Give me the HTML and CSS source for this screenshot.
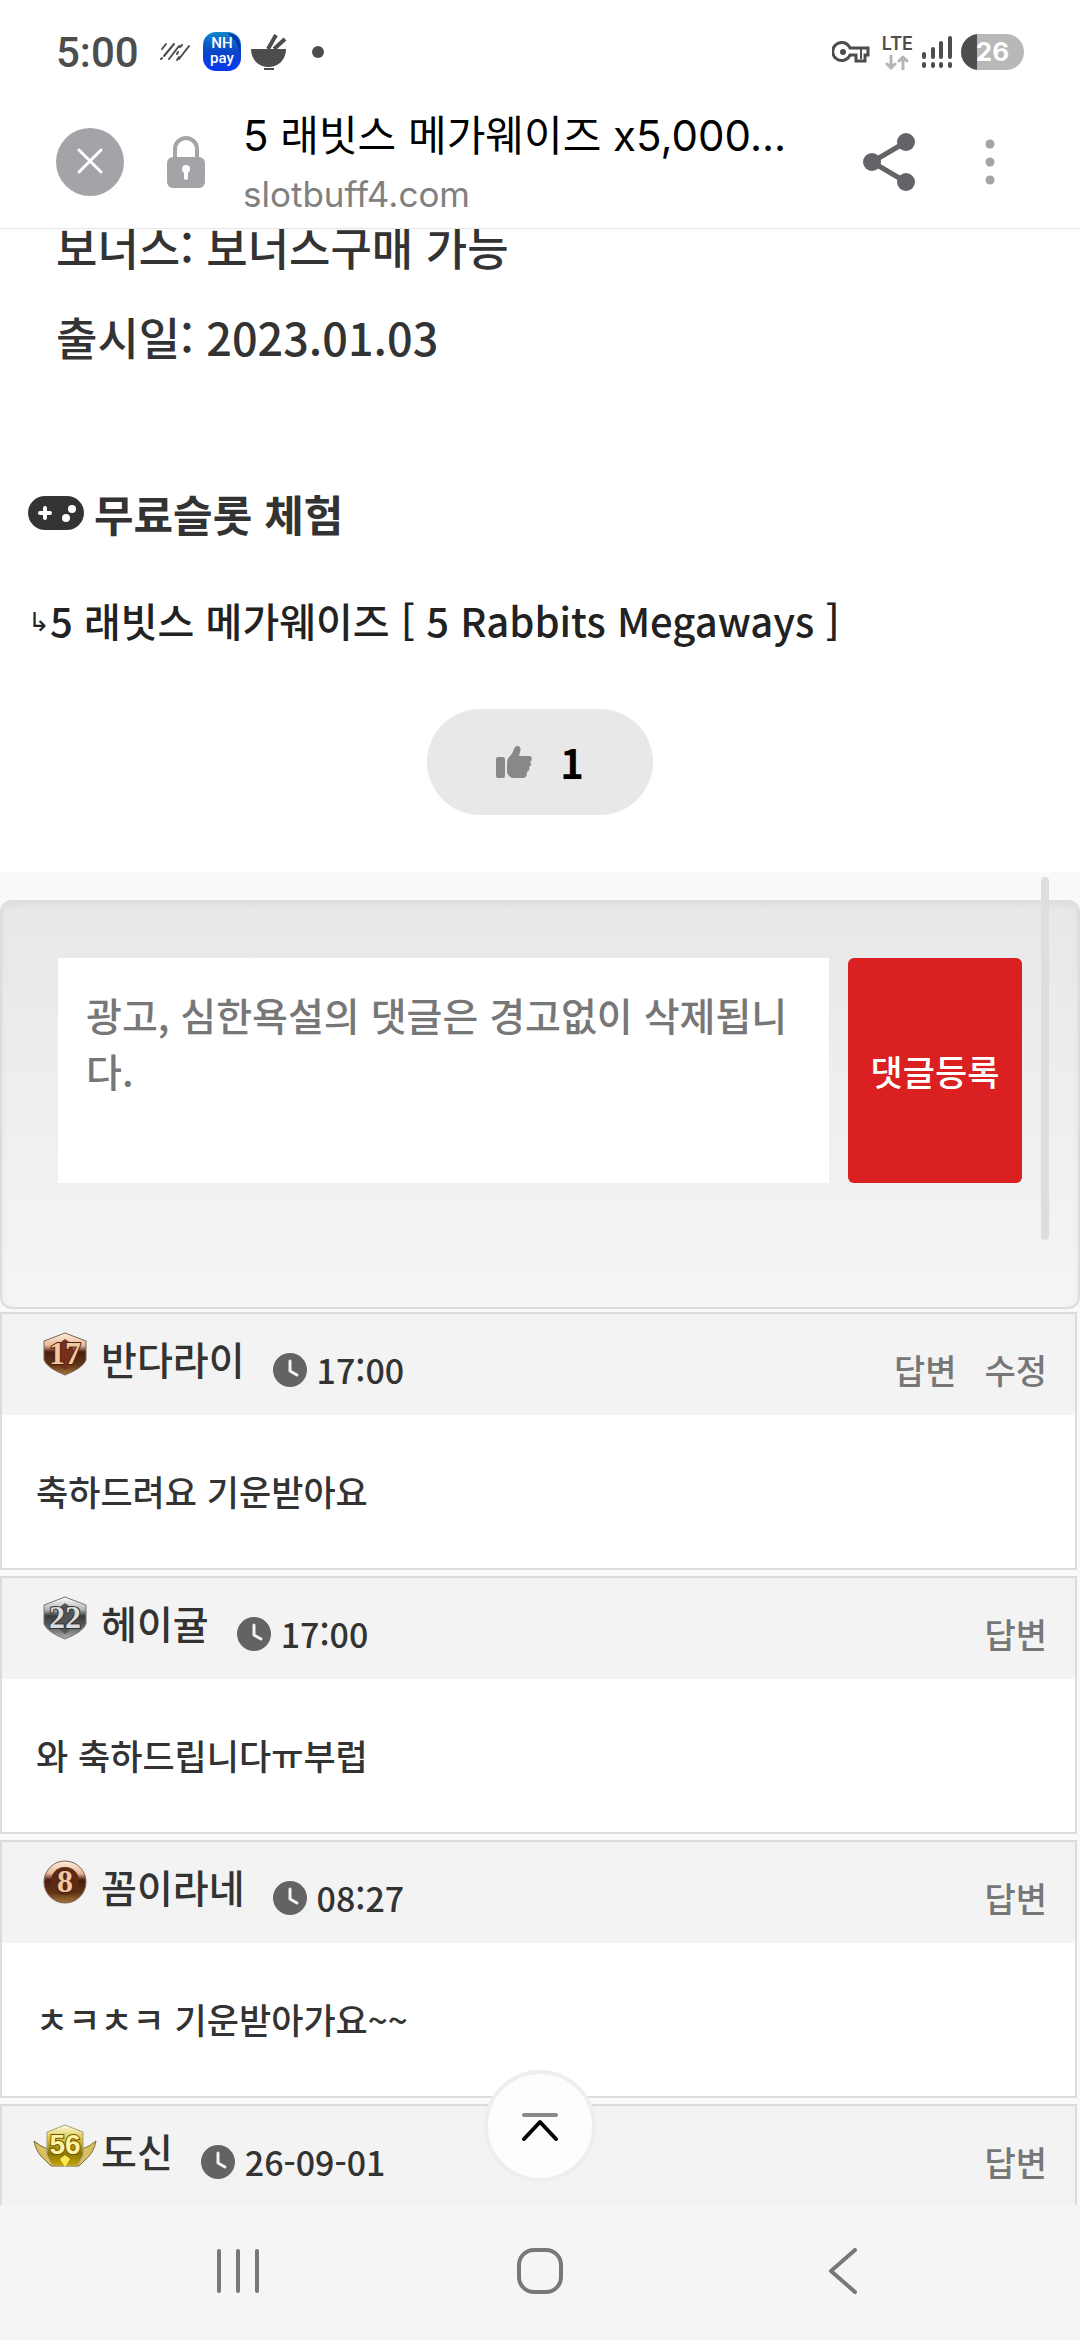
FILE: index.html
```html
<!DOCTYPE html>
<html lang="ko">

<head>
    <meta charset="UTF-8" />
    <meta name="viewport" content="width=device-width, initial-scale=1.0" />
    <title>5 래빗스 메가웨이즈 x5,000</title>
    <link rel="stylesheet" href="styles.css">
</head>

<body>
    <svg class="defs" width="0" height="0" aria-hidden="true">
        <defs>
            <linearGradient id="bronze" x1="0" y1="0" x2="0" y2="1">
                <stop offset="0" stop-color="#fff0dc" />
                <stop offset="0.3" stop-color="#e8b898" />
                <stop offset="0.45" stop-color="#4a1c10" />
                <stop offset="0.75" stop-color="#5e3416" />
                <stop offset="1" stop-color="#a5773a" />
            </linearGradient>
            <linearGradient id="silver" x1="0" y1="0" x2="0" y2="1">
                <stop offset="0" stop-color="#ffffff" />
                <stop offset="0.3" stop-color="#b4b4b4" />
                <stop offset="0.45" stop-color="#3a3a3a" />
                <stop offset="0.7" stop-color="#5c5c5c" />
                <stop offset="1" stop-color="#b0b0b0" />
            </linearGradient>
            <linearGradient id="gold" x1="0" y1="0" x2="0" y2="1">
                <stop offset="0" stop-color="#fffde8" />
                <stop offset="0.35" stop-color="#dcc13a" />
                <stop offset="0.7" stop-color="#8c7404" />
                <stop offset="1" stop-color="#c9a708" />
            </linearGradient>
            <linearGradient id="nh" x1="0" y1="0" x2="0" y2="1">
                <stop offset="0" stop-color="#1287c8" />
                <stop offset="0.5" stop-color="#0a45c8" />
                <stop offset="1" stop-color="#0538f5" />
            </linearGradient>
            <symbol id="clock" viewBox="0 0 34 34">
                <circle cx="17" cy="17" r="17" fill="#636363" />
                <path d="M17 8v10l7 4" fill="none" stroke="#f3f3f3" stroke-width="3" stroke-linecap="round" stroke-linejoin="round" />
            </symbol>
        </defs>
    </svg>

    <div class="status-bar">
        <span class="status-time">5:00</span>
        <svg width="32" height="20" viewBox="0 0 32 20" fill="none" stroke="#4d4d4d" stroke-width="2" stroke-linecap="round">
            <path d="M3 7l4-5M5 14L15 2M2 17l1-1M10 17l10-13M15 12M18 18l2-3M21 5l2-2M19 10l-1 2M20 17L30 4" />
        </svg>
        <svg class="nh-icon" width="38" height="40" viewBox="0 0 38 40">
            <rect width="38" height="39" rx="13" fill="url(#nh)" />
            <path d="M24 1q12 1 13 12v8Q35 8 24 1z" fill="#0433a8" />
            <text x="19" y="16" text-anchor="middle" class="nh-text">NH</text>
            <text x="19" y="31" text-anchor="middle" class="nh-text">pay</text>
        </svg>
        <svg class="bowl-icon" width="36" height="38" viewBox="0 0 36 38">
            <path d="M0 16h35c0 11-8 18-17.500 18S0 27 0 16z" fill="#4d4d4d" />
            <path d="M17 16L25 2M23 16L34 6" stroke="#4d4d4d" stroke-width="4" />
            <path d="M13 36h10" stroke="#4d4d4d" stroke-width="2" />
        </svg>
        <span class="more-dot"></span>

        <div class="status-right">
            <svg width="38" height="22" viewBox="0 0 38 22" fill="none" stroke="#4d4d4d" stroke-width="3">
                <path d="M18 7h18v7h-3v6h-9v-6h-6A9 9 0 1 1 18 7z" />
                <path d="M29 8v10" stroke="#4d4d4d" stroke-width="2" />
                <circle cx="11" cy="11" r="3" fill="#4d4d4d" stroke="none" />
            </svg>
            <div class="lte">
                <span>LTE</span>
                <svg width="24" height="15" viewBox="0 0 24 15" fill="none" stroke="#b5b5b5" stroke-width="3" stroke-linecap="round" stroke-linejoin="round">
                    <path d="M6 1v12M2 9l4 4 4-4M18 14V2M14 6l4-4 4 4" />
                </svg>
            </div>
            <svg width="32" height="34" viewBox="0 0 32 34" stroke="#4d4d4d" stroke-width="4" stroke-linecap="round">
                <path d="M3 19v3M12 14v8M20 8v14M29 3v19M3 29v2M12 29v2M20 29v2M29 29v2" />
            </svg>
            <div class="battery">26</div>
        </div>
    </div>

    <header class="browser-bar">
        <button class="close-btn" aria-label="닫기">
            <svg width="68" height="68" viewBox="0 0 68 68">
                <circle cx="34" cy="34" r="34" fill="#a3a3a8" />
                <path d="M23 22l22 22M45 22L23 44" stroke="#fff" stroke-width="3" stroke-linecap="round" />
            </svg>
        </button>
        <svg class="lock" width="38" height="52" viewBox="0 0 38 52">
            <path d="M8 23V13a11 11 0 0 1 22 0v10" fill="none" stroke="#a3a3a8" stroke-width="4" />
            <rect y="21" width="38" height="31" rx="6" fill="#a3a3a8" />
            <circle cx="19" cy="33" r="4" fill="#fff" />
            <path d="M19 34v8" stroke="#fff" stroke-width="4" stroke-linecap="round" />
        </svg>
        <div class="page-info">
            <div class="page-title">5 래빗스 메가웨이즈 x5,000...</div>
            <div class="page-url">slotbuff4.com</div>
        </div>
        <button class="share-btn" aria-label="공유">
            <svg width="52" height="58" viewBox="0 0 52 58">
                <path d="M43 9L9 29l34 20" fill="none" stroke="#646468" stroke-width="5" />
                <g fill="#646468">
                    <circle cx="43" cy="9" r="9" />
                    <circle cx="9" cy="29" r="9" />
                    <circle cx="43" cy="49" r="9" />
                </g>
            </svg>
        </button>
        <button class="menu-btn" aria-label="메뉴">
            <svg width="10" height="46" viewBox="0 0 10 46" fill="#a3a3a8">
                <circle cx="5" cy="5" r="4.500" />
                <circle cx="5" cy="23" r="4.500" />
                <circle cx="5" cy="41" r="4.500" />
            </svg>
        </button>
    </header>

    <main class="page">
        <article class="post">
            <p class="info-line">보너스: 보너스구매 가능</p>
            <p class="info-line">출시일: 2023.01.03</p>
            <h2 class="free-title">
                <svg width="56" height="36" viewBox="0 0 56 36">
                    <rect y="1" width="56" height="34" rx="17" fill="#333" />
                    <path d="M17 13v10M12 18h10" stroke="#fff" stroke-width="4" stroke-linecap="round" />
                    <circle cx="44" cy="14" r="4" fill="#fff" />
                    <circle cx="38" cy="23" r="4" fill="#fff" />
                </svg>
                무료슬롯 체험
            </h2>
            <a class="free-link" href="#"><span class="arrow">↳</span>5 래빗스 메가웨이즈 [ 5 Rabbits Megaways ]</a>
            <button class="good-btn" aria-label="추천">
                <svg width="36" height="32" viewBox="0 0 36 32" fill="#888">
                    <rect y="11" width="9" height="21" rx="2" />
                    <path d="M18 32c-4 0-7-3-7-7v-8c0-3 1-5 3-7 2-2 3-4 4-7 1-3 3-3 4-3 3 1 3 4 2 6l-1 4h10c3 0 4 4 1 6 2 2 1 4-1 5 1 2 0 4-2 5 0 3-1 6-4 6z" />
                </svg>
                <span>1</span>
            </button>
        </article>

        <section class="comments">
            <form class="comment-form">
                <textarea aria-label="댓글" placeholder="광고, 심한욕설의 댓글은 경고없이 삭제됩니다."></textarea>
                <button type="button">댓글등록</button>
            </form>

            <div class="comment">
                <div class="comment-head">
                    <div class="author">
                        <svg class="badge" width="64" height="44" viewBox="0 0 64 44">
                            <path d="M32 1l21 8v19q-3 8-21 15Q14 36 11 28V9z" fill="url(#bronze)" stroke="#776458" />
                            <path d="M32 7l8 6v18l-8 7-8-7V13z" fill="#76301a" />
                            <text x="32" y="32" text-anchor="middle" class="level bronze">17</text>
                        </svg>
                        <span>반다라이</span>
                    </div>
                    <div class="meta">
                        <svg width="34" height="34"><use href="#clock" /></svg>
                        <span>17:00</span>
                    </div>
                    <div class="actions"><a href="#">답변</a><a href="#">수정</a></div>
                </div>
                <div class="comment-body">축하드려요 기운받아요</div>
            </div>

            <div class="comment">
                <div class="comment-head">
                    <div class="author">
                        <svg class="badge" width="64" height="44" viewBox="0 0 64 44">
                            <path d="M32 1l21 8v19q-3 8-21 15Q14 36 11 28V9z" fill="url(#silver)" stroke="#777" />
                            <path d="M32 7l8 6v18l-8 7-8-7V13z" fill="#555" />
                            <text x="32" y="32" text-anchor="middle" class="level silver">22</text>
                        </svg>
                        <span>헤이귤</span>
                    </div>
                    <div class="meta">
                        <svg width="34" height="34"><use href="#clock" /></svg>
                        <span>17:00</span>
                    </div>
                    <div class="actions"><a href="#">답변</a></div>
                </div>
                <div class="comment-body">와 축하드립니다ㅠ부럽</div>
            </div>

            <div class="comment">
                <div class="comment-head">
                    <div class="author">
                        <svg class="badge" width="64" height="44" viewBox="0 0 64 44">
                            <circle cx="32" cy="22" r="21" fill="url(#bronze)" stroke="#776458" />
                            <circle cx="32" cy="21" r="14" fill="#5e2a14" />
                            <text x="32" y="32" text-anchor="middle" class="level bronze">8</text>
                        </svg>
                        <span>꼼이라네</span>
                    </div>
                    <div class="meta">
                        <svg width="34" height="34"><use href="#clock" /></svg>
                        <span>08:27</span>
                    </div>
                    <div class="actions"><a href="#">답변</a></div>
                </div>
                <div class="comment-body">ㅊㅋㅊㅋ 기운받아가요~~</div>
            </div>

            <div class="comment">
                <div class="comment-head">
                    <div class="author">
                        <svg class="badge" width="64" height="44" viewBox="0 0 64 44">
                            <path d="M1 17q7 6 14 8l3 11h28l3-11q7-2 14-8-2 12-12 20l-5 5H18l-5-5Q3 29 1 17z" fill="#d9bf62" stroke="#776b35" />
                            <path d="M32 1l18 7v23l-6 11H20l-6-11V8z" fill="url(#gold)" stroke="#a8a078" />
                            <text x="32" y="30" text-anchor="middle" class="level gold">56</text>
                            <path d="M32 31l5 4-5 8-5-8z" fill="#ffe75a" />
                        </svg>
                        <span>도신</span>
                    </div>
                    <div class="meta">
                        <svg width="34" height="34"><use href="#clock" /></svg>
                        <span>26-09-01</span>
                    </div>
                    <div class="actions"><a href="#">답변</a></div>
                </div>
                <div class="comment-body"></div>
            </div>
        </section>

        <div class="scroll-thumb"></div>
        <button class="top-btn" aria-label="맨 위로">
            <svg width="40" height="32" viewBox="0 0 40 32" fill="none" stroke-width="4" stroke-linecap="round" stroke-linejoin="round">
                <path d="M4 5h32" stroke="#888" />
                <path d="M4 29l16-17 16 17" stroke="#000" />
            </svg>
        </button>
    </main>

    <nav class="nav-bar">
        <button aria-label="최근 앱">
            <svg width="46" height="46" viewBox="0 0 46 46" stroke="#787878" stroke-width="4" stroke-linecap="round">
                <path d="M4 3v40M23 3v40M42 3v40" />
            </svg>
        </button>
        <button aria-label="홈">
            <svg width="46" height="46" viewBox="0 0 46 46" fill="none" stroke="#787878" stroke-width="4">
                <rect x="2" y="2" width="42" height="42" rx="15" />
            </svg>
        </button>
        <button aria-label="뒤로">
            <svg width="46" height="46" viewBox="0 0 46 46" fill="none" stroke="#787878" stroke-width="4" stroke-linecap="round" stroke-linejoin="round">
                <path d="M36 2L12 23l24 21" />
            </svg>
        </button>
    </nav>
</body>

</html>
```

FILE: styles.css
```css
* {
    margin: 0;
    padding: 0;
    box-sizing: border-box;
}

body {
    display: flex;
    flex-direction: column;
    height: 100vh;
    overflow: hidden;
    background-color: #fff;
    color: #333;
    font-family: "Noto Sans CJK KR", sans-serif;
    font-weight: 500;
}

svg {
    display: block;
    flex-shrink: 0;
}

button {
    border: none;
    background: none;
    font-family: inherit;
    cursor: pointer;
}

a {
    color: inherit;
    text-decoration: none;
}

.defs {
    position: absolute;
}

/* status bar */
.status-bar {
    display: flex;
    align-items: center;
    flex-shrink: 0;
    height: 104px;
    padding: 0 56px;
    font-family: Roboto, sans-serif;
    color: #4d4d4d;
}

.status-time {
    margin-right: 20px;
    font-size: 42px;
}

.nh-icon {
    margin: 0 10px 0 12px;
}

.nh-text {
    fill: #fff;
    font-family: Roboto, sans-serif;
    font-size: 15px;
    font-weight: 500;
    line-height: 15px;
}

.more-dot {
    width: 12px;
    height: 12px;
    margin-left: 25px;
    border-radius: 50%;
    background-color: #4d4d4d;
}

.status-right {
    display: flex;
    align-items: center;
    gap: 8px;
    margin-left: auto;
}

.lte {
    display: flex;
    flex-direction: column;
    align-items: center;
    gap: 2px;
    margin-left: 4px;
    font-family: Inter, sans-serif;
    font-size: 18px;
    font-weight: 600;
    line-height: 18px;
}

.battery {
    width: 63px;
    height: 36px;
    border-radius: 18px;
    background: linear-gradient(to right, #4d4d4d 26%, #b8b8b8 26%);
    color: #fff;
    font-family: Inter, sans-serif;
    font-size: 26px;
    font-weight: 700;
    line-height: 36px;
    text-align: center;
}

/* browser bar */
.browser-bar {
    display: flex;
    align-items: center;
    flex-shrink: 0;
    height: 125px;
    padding: 0 85px 8px 56px;
    border-bottom: 1px solid #e5e5e5;
}

.lock {
    margin: 0 38px 0 43px;
}

.page-info {
    flex: 1;
    min-width: 0;
    padding-top: 4px;
    font-family: Inter, "Noto Sans CJK KR", sans-serif;
    font-weight: 400;
    white-space: nowrap;
}

.page-title {
    color: #000;
    font-size: 42px;
    line-height: 60px;
}

.page-url {
    color: #808080;
    font-size: 35px;
    line-height: 56px;
}

.menu-btn {
    margin-left: 70px;
}

/* post */
.page {
    position: relative;
    flex: 1;
    min-height: 0;
    overflow: hidden;
    background-color: #f9f9f9;
}

.post {
    margin-top: -27px;
    padding: 0 28px 57px;
    background-color: #fff;
}

.info-line {
    padding-left: 28px;
    font-size: 45px;
    line-height: 90px;
}

.free-title {
    display: flex;
    align-items: center;
    gap: 10px;
    margin-top: 86px;
    font-size: 43px;
    font-weight: 700;
    line-height: 90px;
}

.free-link {
    display: flex;
    align-items: center;
    height: 60px;
    margin-top: 32px;
    color: #222;
    font-size: 40px;
    line-height: 60px;
    white-space: nowrap;
}

.arrow {
    font-size: 26px;
}

.good-btn {
    display: flex;
    align-items: center;
    justify-content: center;
    gap: 28px;
    width: 226px;
    height: 106px;
    margin: 59px auto 0;
    border-radius: 53px;
    background-color: #e8e8e8;
    color: #000;
    font-size: 40px;
    font-weight: 700;
}

/* comments */
.comments {
    padding-top: 28px;
}

.comment-form {
    display: flex;
    gap: 19px;
    height: 409px;
    margin-bottom: 3px;
    padding: 56px;
    border: 2px solid #dcdcdc;
    border-radius: 12px;
    background: linear-gradient(to bottom, #e8e8e8, #f5f5f5);
    box-shadow: inset 0 3px 9px rgba(0, 0, 0, 0.05);
}

.comment-form textarea {
    flex: 1;
    min-width: 0;
    height: 225px;
    padding: 28px;
    border: none;
    background-color: #fff;
    color: #333;
    font-family: inherit;
    font-size: 39px;
    font-weight: 500;
    line-height: 56px;
    word-break: break-all;
    resize: none;
}

.comment-form textarea::placeholder {
    color: #777;
}

.comment-form button {
    width: 174px;
    height: 225px;
    border-radius: 6px;
    background-color: #da2020;
    color: #fff;
    font-size: 35px;
    font-weight: 500;
}

.comment {
    margin: 0 3px 6px 0;
    border: 2px solid #dcdcdc;
    background-color: #fff;
}

.comment-head {
    display: flex;
    align-items: center;
    height: 101px;
    padding: 0 28px 0 31px;
    background-color: #f3f3f3;
}

.author {
    display: flex;
    align-items: center;
    gap: 4px;
    padding-bottom: 14px;
    font-size: 39px;
    line-height: 60px;
}

.badge {
    margin-bottom: 8px;
}

.level {
    font-family: "Liberation Serif", serif;
    font-size: 32px;
    font-weight: 700;
    stroke-width: 2px;
    paint-order: stroke;
}

.bronze {
    fill: #f0c8a0;
    stroke: #54200c;
}

.silver {
    fill: #dcdcdc;
    stroke: #333;
}

.gold {
    fill: #fff2a0;
    stroke: #6d5500;
    font-family: "Liberation Sans", sans-serif;
    font-size: 28px;
}

.meta {
    display: flex;
    align-items: center;
    gap: 10px;
    margin-left: 28px;
    padding-top: 10px;
    font-size: 34px;
    line-height: 50px;
}

.actions {
    display: flex;
    gap: 28px;
    margin-left: auto;
    padding-top: 10px;
    color: #777;
    font-size: 34px;
    line-height: 50px;
}

.comment-body {
    height: 153px;
    padding: 50px 34px;
    font-size: 35px;
    line-height: 52px;
}

.scroll-thumb {
    position: absolute;
    top: 648px;
    right: 31px;
    width: 8px;
    height: 363px;
    border-radius: 4px;
    background-color: #dedee0;
}

.top-btn {
    position: absolute;
    bottom: 23px;
    left: 50%;
    display: flex;
    align-items: center;
    justify-content: center;
    width: 112px;
    height: 112px;
    margin-left: -56px;
    border: 4px solid #eee;
    border-radius: 50%;
    background-color: #fdfdfd;
}

/* navigation bar */
.nav-bar {
    display: flex;
    justify-content: center;
    flex-shrink: 0;
    height: 135px;
    background-color: #f5f5f5;
}

.nav-bar button {
    display: flex;
    align-items: center;
    justify-content: center;
    width: 28%;
    padding-bottom: 4px;
}
```
